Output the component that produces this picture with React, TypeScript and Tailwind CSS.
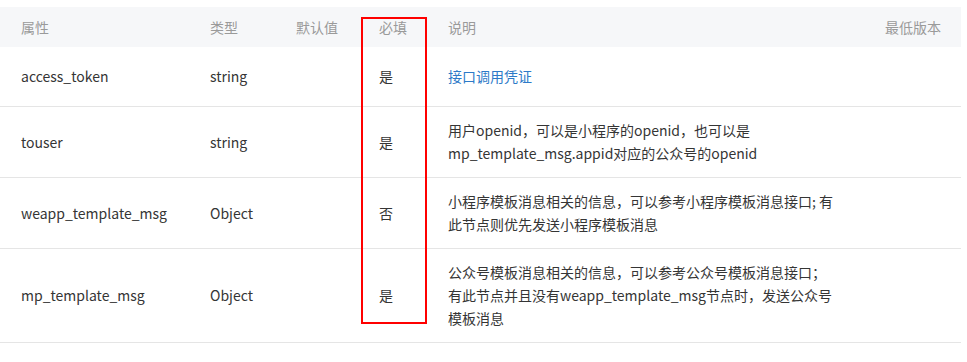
import React from 'react';

type Row = {
  name: string;
  type: string;
  required: string;
  desc: string[];
  link?: boolean;
  height: string;
};

const rows: Row[] = [
  { name: 'access_token', type: 'string', required: '是', desc: ['接口调用凭证'], link: true, height: 'h-[60px]' },
  {
    name: 'touser',
    type: 'string',
    required: '是',
    desc: ['用户openid，可以是小程序的openid，也可以是', 'mp_template_msg.appid对应的公众号的openid'],
    height: 'h-[71px]',
  },
  {
    name: 'weapp_template_msg',
    type: 'Object',
    required: '否',
    desc: ['小程序模板消息相关的信息，可以参考小程序模板消息接口; 有', '此节点则优先发送小程序模板消息'],
    height: 'h-[71px]',
  },
  {
    name: 'mp_template_msg',
    type: 'Object',
    required: '是',
    desc: [
      '公众号模板消息相关的信息，可以参考公众号模板消息接口；',
      '有此节点并且没有weapp_template_msg节点时，发送公众号',
      '模板消息',
    ],
    height: 'h-[94px]',
  },
];

const font = 'font-["Microsoft_YaHei","Noto_Sans_CJK_SC",sans-serif]';

export default function App() {
  return (
    <div className={`relative w-[967px] h-[362px] bg-white pt-[7px] text-[14px] ${font}`}>
      <div className="w-[961px]">
        {/* Header */}
        <div className="flex items-center h-[40px] bg-[#f6f7f9] text-[#9a9a9a]">
          <div className="w-[189px] pl-[21px]">属性</div>
          <div className="w-[86px] pl-[21px]">类型</div>
          <div className="w-[83px] pl-[21px]">默认值</div>
          <div className="w-[69px] pl-[21px]">必填</div>
          <div className="flex-1 pl-[21px]">说明</div>
          <div className="pr-[20px]">最低版本</div>
        </div>

        {/* Body */}
        {rows.map((r) => (
          <div key={r.name} className={`flex items-center ${r.height} border-b border-[#e5e5e5] text-[#353535]`}>
            <div className="w-[189px] pl-[21px]">{r.name}</div>
            <div className="w-[86px] pl-[21px]">{r.type}</div>
            <div className="w-[83px] pl-[21px]"></div>
            <div className="w-[69px] pl-[21px]">{r.required}</div>
            <div className={`flex-1 pl-[21px] leading-[23px] ${r.link ? 'text-[#2d7ac8]' : ''}`}>
              {r.desc.map((line) => (
                <div key={line}>{line}</div>
              ))}
            </div>
          </div>
        ))}
      </div>

      {/* annotation box */}
      <div className="absolute left-[361px] top-[17px] w-[66px] h-[307px] border-2 border-[#ff0000]" />
    </div>
  );
}
